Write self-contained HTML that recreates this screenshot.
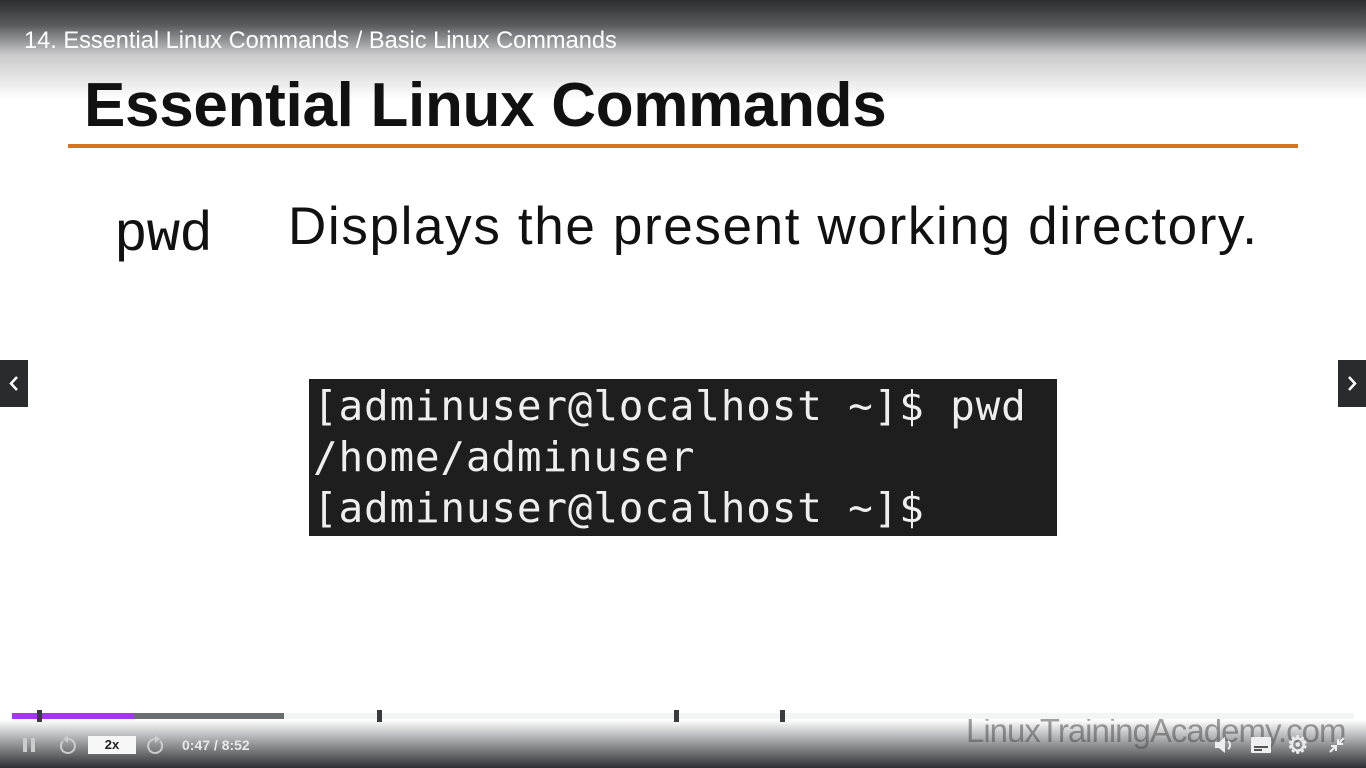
<!DOCTYPE html>
<html><head><meta charset="utf-8"><style>
*{margin:0;padding:0;box-sizing:border-box}
body{width:1366px;height:768px;overflow:hidden;background:#fff;position:relative;font-family:"Liberation Sans",sans-serif}
.top{position:absolute;left:0;top:0;width:1366px;height:100px;background:linear-gradient(#2c2d31 0%,rgba(60,62,66,.85) 25%,rgba(150,150,152,.5) 55%,rgba(255,255,255,0) 100%)}
.ttl{position:absolute;left:24px;top:28px;color:#fff;font-size:23.6px}
h1{position:absolute;left:84px;top:70px;font-size:62px;font-weight:bold;color:#111;letter-spacing:-0.3px}
.line{position:absolute;left:68px;top:144px;width:1230px;height:4px;background:#d9741e}
.pwd{position:absolute;left:114px;top:203px;font-family:"Liberation Mono",monospace;font-size:56px;color:#111;letter-spacing:-1px}
.desc{position:absolute;left:288px;top:196px;font-size:53px;color:#111;letter-spacing:1.65px}
.term{position:absolute;left:309px;top:379px;width:748px;height:157px;background:#1e1e1e;color:#eee;font-family:"DejaVu Sans Mono",monospace;font-size:41px;line-height:51px;padding:2px 0 0 4px;white-space:pre;letter-spacing:.8px}
.nav{position:absolute;top:360px;width:28px;height:47px;background:#2a2b2f}
.bot{position:absolute;left:0;top:720px;width:1366px;height:48px;background:linear-gradient(rgba(255,255,255,0),#a0a1a3 45%,#2e2f34)}
.bar{position:absolute;top:713px;height:6px}
.tick{position:absolute;top:710px;width:5px;height:12px;background:#3a3b3e}
.wm{position:absolute;left:966px;top:712px;font-size:33px;color:rgba(80,80,80,.55);letter-spacing:-1px}
.ctl{position:absolute;color:#e8e8ea;font-size:14px;font-weight:bold}
</style></head><body>
<div class="top"></div>
<div class="ttl">14. Essential Linux Commands / Basic Linux Commands</div>
<h1>Essential Linux Commands</h1>
<div class="line"></div>
<div class="pwd">pwd</div>
<div class="desc">Displays the present working directory.</div>
<div class="term">[adminuser@localhost ~]$ pwd
/home/adminuser
[adminuser@localhost ~]$</div>
<div class="nav" style="left:0"><svg width="28" height="47"><path d="M17 17l-6 6.5 6 6.5" fill="none" stroke="#fff" stroke-width="2.5"/></svg></div>
<div class="nav" style="left:1338px"><svg width="28" height="47"><path d="M11 17l6 6.5-6 6.5" fill="none" stroke="#fff" stroke-width="2.5"/></svg></div>
<div class="bot"></div>
<div class="wm">LinuxTrainingAcademy.com</div>
<div class="bar" style="left:12px;width:1342px;background:#f3f4f4"></div>
<div class="bar" style="left:12px;width:272px;background:#6b6e71"></div>
<div class="bar" style="left:12px;width:122px;background:#a435f0"></div>
<div class="tick" style="left:37px"></div>
<div class="tick" style="left:377px"></div>
<div class="tick" style="left:674px"></div>
<div class="tick" style="left:780px"></div>
<div style="position:absolute;left:23px;top:738px;width:4px;height:14px;background:#ccc"></div>
<div style="position:absolute;left:31px;top:738px;width:4px;height:14px;background:#ccc"></div>
<svg style="position:absolute;left:57px;top:735px" width="20" height="20" viewBox="0 0 20 20"><path d="M6 6a7 7 0 1 0 5-2" fill="none" stroke="#ccc" stroke-width="2"/><path d="M11 0v8l-5-4z" fill="#ccc"/></svg>
<div style="position:absolute;left:88px;top:736px;width:48px;height:18px;background:#f7f7f8;color:#222;font-size:13px;font-weight:bold;text-align:center;line-height:18px">2x</div>
<svg style="position:absolute;left:146px;top:735px" width="20" height="20" viewBox="0 0 20 20"><path d="M14 6a7 7 0 1 1-5-2" fill="none" stroke="#ccc" stroke-width="2"/><path d="M9 0v8l5-4z" fill="#ccc"/></svg>
<div class="ctl" style="left:182px;top:737px">0:47 / 8:52</div>
<svg style="position:absolute;left:1213px;top:735px" width="22" height="20" viewBox="0 0 22 20"><path d="M2 7h4l6-5v16l-6-5H2z" fill="#eee"/><path d="M15 6a5 5 0 0 1 0 8" fill="none" stroke="#eee" stroke-width="2"/></svg>
<svg style="position:absolute;left:1251px;top:737px" width="20" height="16"><rect width="20" height="16" rx="1" fill="#eee"/><rect x="3" y="9" width="14" height="2" fill="#555"/><rect x="3" y="12" width="8" height="2" fill="#555"/></svg>
<div class="ctl" style="left:1287px;top:731px;font-size:24px">&#9881;</div>
<svg style="position:absolute;left:1328px;top:736px" width="18" height="18" viewBox="0 0 18 18"><path d="M2 16l6-6M3 10h5v5M16 2l-6 6M10 3v5h5" fill="none" stroke="#eee" stroke-width="2"/></svg>
</body></html>
